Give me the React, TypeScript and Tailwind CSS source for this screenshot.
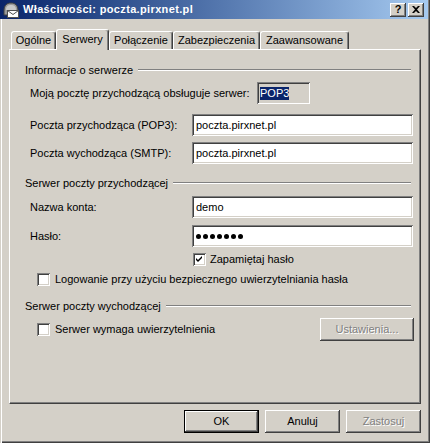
import React from "react";

const raised =
  "shadow-[inset_-1px_-1px_#404040,inset_1px_1px_#ffffff,inset_-2px_-2px_#808080,inset_2px_2px_#d4d0c8]";
const sunken =
  "shadow-[inset_1px_1px_#808080,inset_-1px_-1px_#ffffff,inset_2px_2px_#404040,inset_-2px_-2px_#d4d0c8]";

function Tab({ label, w, selected }: { label: string; w: string; selected?: boolean }) {
  return (
    <div
      className={
        (selected
          ? "relative z-10 h-[21px] -mb-[1px] pb-[2px] "
          : "h-[18px] ") +
        w +
        " flex items-center justify-center bg-[#d4d0c8] border-l border-t border-white border-r border-r-[#404040] rounded-t-[3px] shadow-[inset_-1px_0_#808080]"
      }
    >
      <span className="leading-none">{label}</span>
    </div>
  );
}

function Heading({ text }: { text: string }) {
  return (
    <div className="flex items-center h-[14px] ml-[15px] mr-[9px]">
      <span className="leading-none whitespace-nowrap">{text}</span>
      <div className="flex-1 ml-[5px] h-[2px] border-t border-[#808080] border-b border-b-white" />
    </div>
  );
}

function Input({ value, className = "" }: { value: React.ReactNode; className?: string }) {
  return (
    <div className={"w-[221px] h-[22px] bg-white flex items-center pl-[4px] " + sunken + " " + className}>
      {value}
    </div>
  );
}

function Checkbox({ checked }: { checked?: boolean }) {
  return (
    <div className={"w-[13px] h-[13px] bg-white flex items-center justify-center shrink-0 " + sunken}>
      {checked && (
        <svg width="7" height="7" viewBox="0 0 7 7">
          <path d="M0 2 L2 4 L6 0 L6 2 L2 6 L0 4 Z" fill="#000" />
        </svg>
      )}
    </div>
  );
}

function Btn({
  label,
  disabled,
  def,
  w = "w-[75px]",
  h = "h-[23px]",
}: {
  label: string;
  disabled?: boolean;
  def?: boolean;
  w?: string;
  h?: string;
}) {
  return (
    <div
      className={
        w +
        " " +
        h +
        " flex items-center justify-center bg-[#d4d0c8] " +
        (def
          ? "shadow-[inset_0_0_0_1px_#000000,inset_-2px_-2px_#404040,inset_2px_2px_#ffffff,inset_-3px_-3px_#808080]"
          : raised)
      }
    >
      <span
        className={
          "leading-none " +
          (disabled ? "text-[#808080] [text-shadow:1px_1px_0_#ffffff]" : "text-black")
        }
      >
        {label}
      </span>
    </div>
  );
}

function TitleBtn({ children }: { children: React.ReactNode }) {
  return (
    <div className={"w-[16px] h-[14px] bg-[#d4d0c8] flex items-center justify-center " + raised}>
      {children}
    </div>
  );
}

export default function App() {
  return (
    <div
      className="w-[430px] h-[443px] bg-[#d4d0c8] flex flex-col text-[11px] text-black shadow-[inset_1px_0_#d4d0c8,inset_2px_0_#ffffff,inset_-1px_-1px_#404040,inset_-2px_-2px_#808080]"
      style={{ fontFamily: '"Liberation Sans", Arial, sans-serif' }}
    >
      {/* Title bar */}
      <div className="w-[428px] h-[19px] bg-linear-to-r from-[#0a246a] to-[#a6caf0] flex items-center pl-[3px] pr-[4px]">
        <svg width="16" height="16" viewBox="0 0 16 16" className="shrink-0">
          <path d="M1 9 C1 3 4 1 8 1 C12 1 15 3 15 9 L15 13 L1 13 Z" fill="#9a9a9a" stroke="#404040" strokeWidth="1" />
          <path d="M3 8 C3 4 5 3 8 3 C11 3 13 4 13 8 Z" fill="#c8c8c8" />
          <rect x="4.5" y="8.5" width="11" height="7" fill="#ffffff" stroke="#505050" strokeWidth="1" />
          <path d="M4.5 8.5 L10 12.5 L15.5 8.5" fill="none" stroke="#505050" strokeWidth="1" />
        </svg>
        <span className="ml-[4px] text-white font-bold leading-none tracking-[0.35px]">Właściwości: poczta.pirxnet.pl</span>
        <div className="flex-1" />
        <div className="flex gap-[2px]">
          <TitleBtn>
            <span className="font-bold text-[11px] leading-none -mt-[1px]">?</span>
          </TitleBtn>
          <TitleBtn>
            <svg width="8" height="7" viewBox="0 0 8 7">
              <path d="M0 0 L2 0 L4 2 L6 0 L8 0 L5 3.5 L8 7 L6 7 L4 5 L2 7 L0 7 L3 3.5 Z" fill="#000" />
            </svg>
          </TitleBtn>
        </div>
      </div>

      {/* Tabs */}
      <div className="mt-[10px] mx-[9px] h-[20px] flex items-end pl-[2px]">
        <Tab label="Ogólne" w="w-[45px]" />
        <Tab label="Serwery" w="w-[53px]" selected />
        <Tab label="Połączenie" w="w-[64px]" />
        <Tab label="Zabezpieczenia" w="w-[87px]" />
        <Tab label="Zaawansowane" w="w-[89px]" />
      </div>

      {/* Panel */}
      <div className="mx-[9px] h-[355px] border-l border-t border-white border-r border-b border-r-[#404040] border-b-[#404040] shadow-[inset_-1px_-1px_#808080] flex flex-col">
        <div className="mt-[13px]">
          <Heading text="Informacje o serwerze" />
        </div>

        <div className="mt-[5px] h-[22px] flex items-center ml-[20px]">
          <span className="w-[227px] leading-none">Moją pocztę przychodzącą obsługuje serwer:</span>
          <div className={"w-[53px] h-[22px] bg-[#d4d0c8] flex items-center pl-[3px] " + sunken}>
            <span className="bg-[#0a246a] text-white leading-none px-[0px] py-[1px]">POP3</span>
          </div>
        </div>

        <div className="mt-[10px] h-[22px] flex items-center ml-[20px]">
          <span className="w-[162px] leading-none">Poczta przychodząca (POP3):</span>
          <Input value={<span className="leading-none">poczta.pirxnet.pl</span>} />
        </div>

        <div className="mt-[6px] h-[22px] flex items-center ml-[20px]">
          <span className="w-[162px] leading-none">Poczta wychodząca (SMTP):</span>
          <Input value={<span className="leading-none">poczta.pirxnet.pl</span>} />
        </div>

        <div className="mt-[12px]">
          <Heading text="Serwer poczty przychodzącej" />
        </div>

        <div className="mt-[6px] h-[22px] flex items-center ml-[20px]">
          <span className="w-[162px] leading-none">Nazwa konta:</span>
          <Input value={<span className="leading-none">demo</span>} />
        </div>

        <div className="mt-[7px] h-[22px] flex items-center ml-[20px]">
          <span className="w-[162px] leading-none">Hasło:</span>
          <Input
            value={
              <div className="flex gap-[2px]">
                {[0, 1, 2, 3, 4, 5, 6].map((i) => (
                  <div key={i} className="w-[5px] h-[5px] rounded-full bg-black" />
                ))}
              </div>
            }
          />
        </div>

        <div className="mt-[6px] h-[13px] flex items-center ml-[183px]">
          <Checkbox checked />
          <span className="ml-[4px] leading-none">Zapamiętaj hasło</span>
        </div>

        <div className="mt-[7px] h-[13px] flex items-center ml-[27px]">
          <Checkbox />
          <span className="ml-[5px] leading-none">Logowanie przy użyciu bezpiecznego uwierzytelniania hasła</span>
        </div>

        <div className="mt-[13px]">
          <Heading text="Serwer poczty wychodzącej" />
        </div>

        <div className="mt-[5px] h-[23px] flex items-center ml-[27px] mr-[6px]">
          <Checkbox />
          <span className="ml-[5px] leading-none">Serwer wymaga uwierzytelnienia</span>
          <div className="flex-1" />
          <Btn label="Ustawienia..." disabled w="w-[94px]" />
        </div>
      </div>

      {/* Buttons */}
      <div className="mt-[6px] flex justify-end gap-[6px] pr-[9px]">
        <Btn label="OK" def w="w-[75px]" />
        <Btn label="Anuluj" w="w-[75px]" />
        <Btn label="Zastosuj" disabled w="w-[75px]" />
      </div>
    </div>
  );
}
